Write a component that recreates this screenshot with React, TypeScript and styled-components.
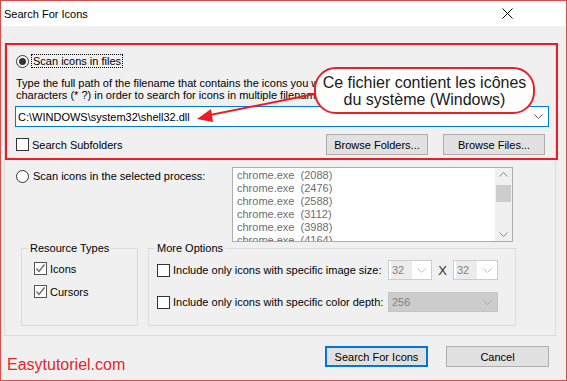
import React from "react";
import styled, { createGlobalStyle } from "styled-components";

const Global = createGlobalStyle`
  html, body { margin: 0; padding: 0; background: #fff; }
  body { font-family: "Liberation Sans", Arial, sans-serif; font-size: 11px; color: #000; }
  * { box-sizing: border-box; }
`;

const Window = styled.div`
  width: 567px;
  height: 381px;
  border: 1px solid #d94c4c;
  display: flex;
  flex-direction: column;
  background: #f0f0f0;
  overflow: hidden;
`;

const TitleBar = styled.div`
  height: 25px;
  flex-shrink: 0;
  background: #fff;
  display: flex;
  align-items: center;
  justify-content: space-between;
  padding: 0 53px 0 3px;
`;

const Title = styled.span`
  font-size: 11px;
`;

const Client = styled.div`
  flex: 1;
  display: flex;
  flex-direction: column;
  padding: 18px 0 0 3px;
`;

const OuterGroup = styled.div`
  width: 552px;
  height: 292px;
  border: 1px solid #dcdcdc;
  display: flex;
  flex-direction: column;
`;

const FileSection = styled.div`
  position: relative;
  margin: -2px -3px 0 0;
  height: 117px;
  border: 2px solid #ed1c24;
  padding: 9px 7px 0 9px;
  display: flex;
  flex-direction: column;
`;

const RadioRow = styled.label`
  display: flex;
  align-items: center;
  gap: 2px;
  height: 14px;
`;

const Radio = styled.span<{ $checked?: boolean }>`
  width: 13px;
  height: 13px;
  border-radius: 50%;
  border: 1px solid #333;
  background: #fff;
  display: flex;
  align-items: center;
  justify-content: center;
  flex-shrink: 0;
  &::after {
    content: "";
    width: 7px;
    height: 7px;
    border-radius: 50%;
    background: #333;
    display: ${(p) => (p.$checked ? "block" : "none")};
  }
`;

const FocusText = styled.span<{ $focus?: boolean }>`
  line-height: 12px;
  padding: 0 1px;
  border: 1px dotted ${(p) => (p.$focus ? "#000" : "transparent")};
  white-space: nowrap;
`;

const Description = styled.div`
  margin-top: 9px;
  line-height: 12px;
  white-space: nowrap;
  overflow: hidden;
`;

const PathCombo = styled.div`
  margin: 5px 0 0 -1px;
  height: 21px;
  border: 1px solid #0078d7;
  background: #fff;
  display: flex;
  align-items: center;
  justify-content: space-between;
  padding: 0 5px 0 2px;
`;

const FileBottom = styled.div`
  margin-top: 7px;
  height: 21px;
  display: flex;
  align-items: center;
  padding-right: 4px;
`;

const CheckRow = styled.label`
  display: flex;
  align-items: center;
  gap: 3px;
  white-space: nowrap;
`;

const Box = styled.span<{ $muted?: boolean }>`
  width: 13px;
  height: 13px;
  border: 1px solid ${(p) => (p.$muted ? "#555" : "#333")};
  background: #fff;
  display: flex;
  align-items: center;
  justify-content: center;
  flex-shrink: 0;
`;

const ButtonGroup = styled.div<{ $gap: number }>`
  margin-left: auto;
  display: flex;
  gap: ${(p) => p.$gap}px;
`;

const Button = styled.button<{ $w: number; $default?: boolean }>`
  width: ${(p) => p.$w}px;
  height: 21px;
  margin: 0;
  padding: 0;
  background: #e1e1e1;
  border: ${(p) => (p.$default ? "2px solid #0078d7" : "1px solid #adadad")};
  font-family: "Liberation Sans", Arial, sans-serif;
  font-size: 11px;
  color: #000;
`;

const Callout = styled.div`
  position: absolute;
  left: 307px;
  top: 22px;
  width: 221px;
  height: 47px;
  border: 2px solid #e8202a;
  border-radius: 22px;
  background: #fff;
  font-size: 16px;
  line-height: 17px;
  text-align: center;
  padding-top: 5px;
  color: #1a1a1a;
`;

const ArrowLayer = styled.svg`
  position: absolute;
  left: -2px;
  top: -2px;
  pointer-events: none;
`;

const ProcessRow = styled.div`
  margin-top: 7px;
  padding-left: 11px;
  display: grid;
  grid-template-columns: 216px 281px;
  align-items: start;
`;

const ProcessRadio = styled(RadioRow)`
  margin-top: 2px;
`;

const ListBox = styled.div`
  width: 281px;
  height: 75px;
  border: 1px solid #adadad;
  background: #fff;
  display: flex;
  overflow: hidden;
`;

const ListItems = styled.div`
  flex: 1;
  padding: 1px 4px;
  color: #6d6d6d;
  line-height: 13px;
  white-space: pre;
`;

const ScrollBar = styled.div`
  width: 17px;
  background: #f0f0f0;
  display: flex;
  flex-direction: column;
  align-items: center;
  justify-content: space-between;
  padding: 4px 0;
`;

const Thumb = styled.div`
  width: 15px;
  height: 17px;
  background: #cdcdcd;
  margin-top: -22px;
`;

const GroupsRow = styled.div`
  display: flex;
  gap: 10px;
  padding-left: 16px;
`;

const Group = styled.fieldset<{ $w: number }>`
  width: ${(p) => p.$w}px;
  height: 84px;
  margin: 0;
  border: 1px solid #dcdcdc;
  padding: 0;
  min-width: 0;
`;

const Legend = styled.legend`
  padding: 0 2px;
  margin-left: 6px;
  line-height: 13px;
`;

const ResourceList = styled.div`
  padding: 7px 0 0 12px;
  display: flex;
  flex-direction: column;
  gap: 10px;
`;

const OptionGrid = styled.div`
  padding: 5px 0 0 8px;
  display: grid;
  grid-template-columns: 231px auto;
  row-gap: 12px;
  align-items: center;
`;

const SizeCombos = styled.div`
  display: flex;
  align-items: center;
`;

const Times = styled.span`
  width: 21px;
  text-align: center;
  font-size: 13px;
  color: #333;
`;

const SmallCombo = styled.div<{ $w: number; $filled?: boolean }>`
  width: ${(p) => p.$w}px;
  height: 20px;
  border: 1px solid ${(p) => (p.$filled ? "#c4c4c4" : "#cccccc")};
  background: ${(p) => (p.$filled ? "#cccccc" : "#fff")};
  display: flex;
  align-items: center;
  justify-content: space-between;
  padding: 0 5px 0 2px;
  color: #838383;
`;

const ComboValue = styled.span<{ $hl?: boolean }>`
  background: ${(p) => (p.$hl ? "#ececec" : "transparent")};
  padding: 2px 8px 2px 1px;
  line-height: 14px;
`;

const Footer = styled.div`
  margin-top: 10px;
  display: flex;
  align-items: flex-start;
  padding: 0 17px 0 3px;
`;

const Watermark = styled.span`
  margin-top: 9px;
  font-size: 16px;
  line-height: 20px;
  color: #e1262b;
`;

const Chevron = ({ color = "#555", up = false }: { color?: string; up?: boolean }) => (
  <svg width="9" height="5" viewBox="0 0 9 5">
    <polyline
      points={up ? "0.5,4.5 4.5,0.5 8.5,4.5" : "0.5,0.5 4.5,4.5 8.5,0.5"}
      fill="none"
      stroke={color}
      strokeWidth="1"
    />
  </svg>
);

const Check = () => (
  <svg width="11" height="11" viewBox="0 0 11 11">
    <polyline points="1.5,5.5 4,8.5 9.5,1.5" fill="none" stroke="#666" strokeWidth="1.3" />
  </svg>
);

const processes = ["2088", "2476", "2588", "3112", "3988", "4164"];

export default function App() {
  return (
    <>
      <Global />
      <Window>
        <TitleBar>
          <Title>Search For Icons</Title>
          <svg width="11" height="11" viewBox="0 0 11 11">
            <path d="M0.5 0.5 L10.5 10.5 M10.5 0.5 L0.5 10.5" stroke="#000" strokeWidth="1" />
          </svg>
        </TitleBar>
        <Client>
          <OuterGroup>
            <FileSection>
              <RadioRow>
                <Radio $checked />
                <FocusText $focus>Scan icons in files</FocusText>
              </RadioRow>
              <Description>
                Type the full path of the filename that contains the icons you want to find. You can use wildcard
                <br />
                characters (* ?) in order to search for icons in multiple filenames.
              </Description>
              <PathCombo>
                <span>C:\WINDOWS\system32\shell32.dll</span>
                <Chevron />
              </PathCombo>
              <FileBottom>
                <CheckRow>
                  <Box />
                  <span>Search Subfolders</span>
                </CheckRow>
                <ButtonGroup $gap={15}>
                  <Button $w={102}>Browse Folders...</Button>
                  <Button $w={102}>Browse Files...</Button>
                </ButtonGroup>
              </FileBottom>
              <ArrowLayer width="557" height="119" viewBox="0 0 557 119">
                <line x1="320" y1="49" x2="200" y2="73" stroke="#ed1c24" strokeWidth="2" />
                <polygon points="192,76 206,66 208,79" fill="#ed1c24" />
              </ArrowLayer>
              <Callout>
                Ce fichier contient les icônes
                <br />
                du système (Windows)
              </Callout>
            </FileSection>
            <ProcessRow>
              <ProcessRadio>
                <Radio />
                <FocusText>Scan icons in the selected process:</FocusText>
              </ProcessRadio>
              <ListBox>
                <ListItems>
                  {processes.map((p) => (
                    <div key={p}>{`chrome.exe  (${p})`}</div>
                  ))}
                </ListItems>
                <ScrollBar>
                  <Chevron color="#858585" up />
                  <Thumb />
                  <Chevron color="#858585" />
                </ScrollBar>
              </ListBox>
            </ProcessRow>
            <GroupsRow>
              <Group $w={117}>
                <Legend>Resource Types</Legend>
                <ResourceList>
                  <CheckRow>
                    <Box $muted>
                      <Check />
                    </Box>
                    <span>Icons</span>
                  </CheckRow>
                  <CheckRow>
                    <Box $muted>
                      <Check />
                    </Box>
                    <span>Cursors</span>
                  </CheckRow>
                </ResourceList>
              </Group>
              <Group $w={368}>
                <Legend>More Options</Legend>
                <OptionGrid>
                  <CheckRow>
                    <Box />
                    <span>Include only icons with specific image size:</span>
                  </CheckRow>
                  <SizeCombos>
                    <SmallCombo $w={44}>
                      <ComboValue $hl>32</ComboValue>
                      <Chevron color="#c0c0c0" />
                    </SmallCombo>
                    <Times>X</Times>
                    <SmallCombo $w={45}>
                      <ComboValue $hl>32</ComboValue>
                      <Chevron color="#c0c0c0" />
                    </SmallCombo>
                  </SizeCombos>
                  <CheckRow>
                    <Box />
                    <span>Include only icons with specific color depth:</span>
                  </CheckRow>
                  <SmallCombo $w={110} $filled>
                    <ComboValue>256</ComboValue>
                    <Chevron color="#a8a8a8" />
                  </SmallCombo>
                </OptionGrid>
              </Group>
            </GroupsRow>
          </OuterGroup>
          <Footer>
            <Watermark>Easytutoriel.com</Watermark>
            <ButtonGroup $gap={18}>
              <Button $w={103} $default>Search For Icons</Button>
              <Button $w={103}>Cancel</Button>
            </ButtonGroup>
          </Footer>
        </Client>
      </Window>
    </>
  );
}
